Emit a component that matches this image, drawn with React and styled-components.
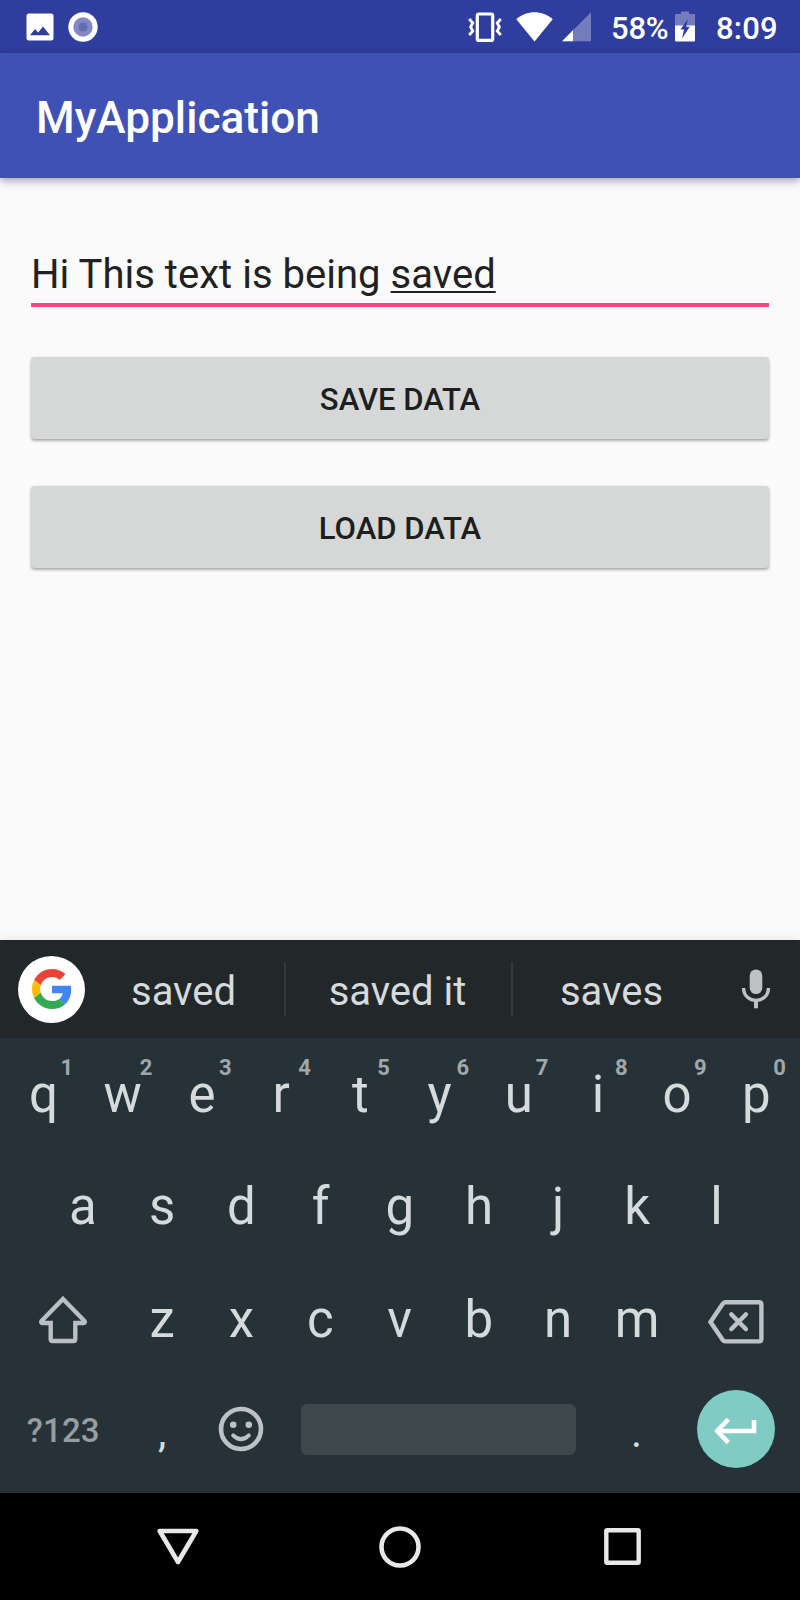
import React from "react";
import styled, { createGlobalStyle } from "styled-components";

const GlobalStyle = createGlobalStyle`
  * { box-sizing: border-box; }
  body { margin: 0; background: #fafafa; font-family: Roboto, "Liberation Sans", sans-serif; }
`;

const Screen = styled.div`
  width: 800px;
  height: 1600px;
  display: flex;
  flex-direction: column;
  overflow: hidden;
  background: #fafafa;
`;

const StatusBar = styled.header`
  flex: none;
  height: 53px;
  padding: 0 24px 0 26px;
  display: flex;
  justify-content: space-between;
  background: #2f3d9e;
  color: #fff;
`;

const StatusGroup = styled.div`
  display: flex;
  align-items: center;
  gap: ${(p) => p.$gap || 0}px;
`;

const StatusText = styled.span`
  width: ${(p) => p.$width}px;
  margin-left: ${(p) => p.$before}px;
  padding-top: 3px;
  font-size: 31px;
  line-height: 53px;
  font-weight: 500;
  letter-spacing: ${(p) => p.$tracking || 0}px;
  white-space: nowrap;
`;

const StatusIcon = styled.svg`
  display: block;
  flex: none;
  margin-left: ${(p) => p.$before || 0}px;
`;

const AppBar = styled.div`
  flex: none;
  position: relative;
  height: 125px;
  padding: 5px 36px 0;
  display: flex;
  align-items: center;
  background: #3f51b5;
  box-shadow: 0 3px 8px rgba(0, 0, 0, 0.34);
`;

const Title = styled.h1`
  margin: 0;
  font-size: 44.2px;
  font-weight: 500;
  color: #fff;
`;

const Content = styled.main`
  flex: 1;
  padding: 62px 31px 0;
  display: flex;
  flex-direction: column;
`;

const Field = styled.div`
  height: 67px;
  padding-top: 11px;
  border-bottom: 4px solid #f04a84;
  font-size: 40px;
  line-height: 47px;
  color: #212121;
  letter-spacing: 0.03px;
  white-space: nowrap;
`;

const Composing = styled.span`
  text-decoration: underline;
  text-decoration-thickness: 2px;
  text-underline-offset: 3px;
  text-decoration-skip-ink: none;
`;

const RaisedButton = styled.button`
  height: 82px;
  margin: ${(p) => p.$before}px 0 0;
  padding: 2px 0 0;
  border: 0;
  border-radius: 4px;
  background: #d6d8d7;
  box-shadow: 0 2px 3px rgba(0, 0, 0, 0.3), 0 0 2px rgba(0, 0, 0, 0.12);
  font: 500 31.1px Roboto, "Liberation Sans", sans-serif;
  color: #1d1e1e;
`;

const Keyboard = styled.section`
  flex: none;
  position: relative;
  height: 553px;
  background: #273238;
  color: #d5dadd;
  box-shadow: 0 0 10px rgba(0, 0, 0, 0.1);
`;

const SuggestionBar = styled.div`
  height: 98px;
  display: flex;
  align-items: center;
  background: #222729;
`;

const GoogleBadge = styled.div`
  flex: none;
  width: 67px;
  height: 67px;
  margin-left: 18px;
  border-radius: 50%;
  background: #fff;
  display: flex;
  align-items: center;
  justify-content: center;
`;

const Suggestion = styled.div`
  width: ${(p) => p.$width}px;
  padding: 4px 2px 0 0;
  font-size: 40px;
  text-align: center;
`;

const Divider = styled.div`
  flex: none;
  width: 2px;
  height: 54px;
  background: #34393c;
`;

const MicSlot = styled.div`
  flex: 1;
  display: flex;
  justify-content: center;
`;

const KeyRow = styled.div`
  height: ${(p) => p.$height || 112}px;
  padding: 0 ${(p) => p.$inset}px;
  display: flex;
`;

const Key = styled.div`
  position: relative;
  flex: none;
  width: ${(p) => p.$width || 79.2}px;
  padding-top: ${(p) => p.$drop || 0}px;
  display: flex;
  align-items: center;
  justify-content: center;
  font-size: ${(p) => p.$size || 51}px;
  line-height: 60px;
`;

const Hint = styled.span`
  position: absolute;
  top: 17px;
  right: 10px;
  font-size: 22px;
  line-height: 26px;
  font-weight: 700;
  color: #a0a8ac;
`;

const SymbolLabel = styled.span`
  padding-top: 3px;
  font-size: 33px;
  font-weight: 500;
  letter-spacing: 0.2px;
  color: #969ea2;
`;

const SpaceBar = styled.div`
  width: 275px;
  height: 51px;
  border-radius: 6px;
  background: #3d474c;
`;

const EnterButton = styled.div`
  width: 78px;
  height: 78px;
  border-radius: 50%;
  background: #80cbc4;
  display: flex;
  align-items: center;
  justify-content: center;
`;

const NavBar = styled.nav`
  flex: none;
  height: 107px;
  padding: 0 67px;
  display: flex;
  align-items: center;
  background: #000;
`;

const NavItem = styled.div`
  flex: 1;
  display: flex;
  justify-content: center;
`;

const PhotoIcon = () => (
  <StatusIcon width="28" height="28" viewBox="0 0 28 28">
    <rect x="0.5" y="0.5" width="27" height="27" rx="2.5" fill="#fff" />
    <path d="M4 22.3 L9 16 L12.2 19.6 L17 13.6 L24 22.3 Z" fill="#2f3d9e" />
  </StatusIcon>
);

const RecordIcon = () => (
  <StatusIcon width="30" height="30" viewBox="0 0 30 30">
    <circle cx="15" cy="15" r="14.7" fill="#fff" />
    <circle cx="15" cy="15" r="9.7" fill="#8388c4" />
    <circle cx="15" cy="15" r="4.6" fill="#656cb4" />
  </StatusIcon>
);

const VibrateIcon = () => (
  <StatusIcon width="34" height="30" viewBox="0 0 34 30" fill="none" stroke="#fff">
    <rect x="9.3" y="2" width="15.4" height="26.4" rx="1.5" strokeWidth="3.2" />
    <path d="M1.2 7 L4.8 11 L2.6 15 L4.8 19 L1.2 23" strokeWidth="2.8" />
    <path d="M32.8 7 L29.2 11 L31.4 15 L29.2 19 L32.8 23" strokeWidth="2.8" />
  </StatusIcon>
);

const WifiIcon = () => (
  <StatusIcon $before={14} width="37" height="30" viewBox="0 0 37 30">
    <path d="M18.5 29.5 L0.3 7.3 C10.5 -2 26.5 -2 36.7 7.3 Z" fill="#fff" />
  </StatusIcon>
);

const SignalIcon = () => (
  <StatusIcon $before={9} width="29" height="30" viewBox="0 0 29 30">
    <path d="M0 29.3 L29 0.3 V29.3 Z" fill="#757cbd" />
    <path d="M0 29.3 L11 18.3 V29.3 Z" fill="#fff" />
  </StatusIcon>
);

const BatteryIcon = () => (
  <StatusIcon width="20" height="31" viewBox="0 0 20 31">
    <path d="M6 0.5 H14 V3 H20 V15 H0 V3 H6 Z" fill="#757cbd" />
    <path d="M0 14.5 H20 V29.5 Q20 30.5 19 30.5 H1 Q0 30.5 0 29.5 Z" fill="#fff" />
    <path d="M12.8 8 L5.5 18.4 H9 L7 27.5 L14.8 15.8 H11.2 Z" fill="#2f3d9e" />
  </StatusIcon>
);

const GoogleIcon = () => (
  <svg width="40" height="40" viewBox="0 0 48 48">
    <path fill="#EA4335" d="M24 9.5c3.54 0 6.71 1.22 9.21 3.6l6.85-6.85C35.9 2.38 30.47 0 24 0 14.62 0 6.51 5.38 2.56 13.22l7.98 6.19C12.43 13.72 17.74 9.5 24 9.5z" />
    <path fill="#4285F4" d="M46.98 24.55c0-1.57-.15-3.09-.38-4.55H24v9.02h12.94c-.58 2.96-2.26 5.48-4.78 7.18l7.73 6c4.51-4.18 7.09-10.36 7.09-17.65z" />
    <path fill="#FBBC05" d="M10.53 28.59c-.48-1.45-.76-2.99-.76-4.59s.27-3.14.76-4.59l-7.98-6.19C.92 16.46 0 20.12 0 24c0 3.88.92 7.54 2.56 10.78l7.97-6.19z" />
    <path fill="#34A853" d="M24 48c6.48 0 11.93-2.13 15.89-5.81l-7.73-6c-2.15 1.45-4.92 2.3-8.16 2.3-6.26 0-11.57-4.22-13.47-9.91l-7.98 6.19C6.51 42.62 14.62 48 24 48z" />
  </svg>
);

const MicIcon = () => (
  <svg width="30" height="40" viewBox="0 0 30 40">
    <rect x="8.7" y="0.5" width="12.6" height="24.5" rx="6.3" fill="#bfc1c2" />
    <path d="M2.6 19 C2.6 35.5 27.4 35.5 27.4 19" fill="none" stroke="#bfc1c2" strokeWidth="3.4" />
    <path d="M15 31 V39.3" stroke="#bfc1c2" strokeWidth="4" />
  </svg>
);

const ShiftIcon = () => (
  <svg width="52" height="50" viewBox="0 0 52 50">
    <path d="M26 4 L47.5 26 Q48.5 28 46.5 28 H38.3 V44 Q38.3 46 36.3 46 H15.7 Q13.7 46 13.7 44 V28 H5.5 Q3.5 28 4.5 26 Z" fill="none" stroke="#b9bfc2" strokeWidth="4.4" />
  </svg>
);

const BackspaceIcon = () => (
  <svg width="58" height="46" viewBox="0 0 58 46">
    <path d="M18.5 3.3 H52 Q54.4 3.3 54.4 5.7 V40 Q54.4 42.4 52 42.4 H18.5 Q16.6 42.4 15.6 40.8 L3.5 23 L15.6 5 Q16.6 3.3 18.5 3.3 Z" fill="none" stroke="#bcc2c5" strokeWidth="4.4" />
    <path d="M23.8 15.5 L38.2 30 M38.2 15.5 L23.8 30" transform="translate(0.6 0)" stroke="#bcc2c5" strokeWidth="4.6" strokeLinecap="round" />
  </svg>
);

const SmileIcon = () => (
  <svg width="46" height="46" viewBox="0 0 46 46">
    <circle cx="23" cy="23" r="20" fill="none" stroke="#bcc2c5" strokeWidth="4.6" />
    <circle cx="15.2" cy="18.7" r="3.3" fill="#bcc2c5" />
    <circle cx="30.8" cy="18.7" r="3.3" fill="#bcc2c5" />
    <path d="M15.2 29.3 Q23 37 30.8 29.3" fill="none" stroke="#bcc2c5" strokeWidth="4" strokeLinecap="round" />
  </svg>
);

const EnterIcon = () => (
  <svg width="44" height="32" viewBox="0 0 44 32" fill="none" stroke="#fff" strokeWidth="4.6">
    <path d="M40 7 V18 H4" />
    <path d="M14.3 6.2 L3.3 18 L14.3 29.6" />
  </svg>
);

const BackIcon = () => (
  <svg width="42" height="38" viewBox="0 0 42 38">
    <path d="M2.7 3 H39.3 L21 34 Z" fill="none" stroke="#e8e8e8" strokeWidth="4.6" strokeLinejoin="round" />
  </svg>
);

const HomeIcon = () => (
  <svg width="42" height="42" viewBox="0 0 42 42">
    <circle cx="21" cy="21" r="18.5" fill="none" stroke="#e8e8e8" strokeWidth="4.6" />
  </svg>
);

const RecentsIcon = () => (
  <svg width="37" height="37" viewBox="0 0 37 37">
    <rect x="2.3" y="2.3" width="32.4" height="32.4" rx="1" fill="none" stroke="#e8e8e8" strokeWidth="4.4" />
  </svg>
);

export default function App() {
  return (
    <>
      <GlobalStyle />
      <Screen>
        <StatusBar>
          <StatusGroup $gap={14}>
            <PhotoIcon />
            <RecordIcon />
          </StatusGroup>
          <StatusGroup>
            <VibrateIcon />
            <WifiIcon />
            <SignalIcon />
            <StatusText $before={20} $width={64} $tracking={-0.2}>58%</StatusText>
            <BatteryIcon />
            <StatusText $before={21} $width={60} $tracking={0.2}>8:09</StatusText>
          </StatusGroup>
        </StatusBar>
        <AppBar>
          <Title>MyApplication</Title>
        </AppBar>
        <Content>
          <Field>
            Hi This text is being <Composing>saved</Composing>
          </Field>
          <RaisedButton $before={50}>SAVE DATA</RaisedButton>
          <RaisedButton $before={47}>LOAD DATA</RaisedButton>
        </Content>
        <Keyboard>
          <SuggestionBar>
            <GoogleBadge>
              <GoogleIcon />
            </GoogleBadge>
            <Suggestion $width={199}>saved</Suggestion>
            <Divider />
            <Suggestion $width={225}>saved it</Suggestion>
            <Divider />
            <Suggestion $width={199}>saves</Suggestion>
            <MicSlot>
              <MicIcon />
            </MicSlot>
          </SuggestionBar>
          <KeyRow $inset={4}>
            {[..."qwertyuiop"].map((letter, i) => (
              <Key key={letter} $drop={1}>
                {letter}
                <Hint>{(i + 1) % 10}</Hint>
              </Key>
            ))}
          </KeyRow>
          <KeyRow $inset={43.4}>
            {[..."asdfghjkl"].map((letter) => (
              <Key key={letter} $drop={1}>{letter}</Key>
            ))}
          </KeyRow>
          <KeyRow $inset={4}>
            <Key $width={118.5} $drop={4}>
              <ShiftIcon />
            </Key>
            {[..."zxcvbnm"].map((letter) => (
              <Key key={letter} $drop={3}>{letter}</Key>
            ))}
            <Key $width={118.5} $drop={8}>
              <BackspaceIcon />
            </Key>
          </KeyRow>
          <KeyRow $inset={4} $height={110}>
            <Key $width={118.5}>
              <SymbolLabel>?123</SymbolLabel>
            </Key>
            <Key $size={42} $drop={7}>,</Key>
            <Key>
              <SmileIcon />
            </Key>
            <Key $width={316}>
              <SpaceBar />
            </Key>
            <Key $size={42} $drop={7}>.</Key>
            <Key $width={119}>
              <EnterButton>
                <EnterIcon />
              </EnterButton>
            </Key>
          </KeyRow>
        </Keyboard>
        <NavBar>
          <NavItem>
            <BackIcon />
          </NavItem>
          <NavItem>
            <HomeIcon />
          </NavItem>
          <NavItem>
            <RecentsIcon />
          </NavItem>
        </NavBar>
      </Screen>
    </>
  );
}
